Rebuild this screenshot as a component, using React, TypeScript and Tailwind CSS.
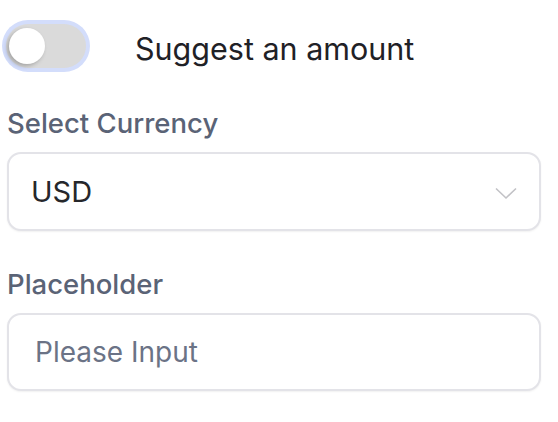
import React, { useState } from 'react';

const App: React.FC = () => {
  const [suggest, setSuggest] = useState(false);
  const [currency, setCurrency] = useState('USD');

  return (
    <div className="min-h-screen bg-white pl-[7px] pr-[17px] font-['Inter','Liberation_Sans',sans-serif]">
      <div className="flex items-start pt-[24px]">
        <button
          onClick={() => setSuggest(!suggest)}
          className={`relative ml-[-1px] h-[44px] w-[80px] shrink-0 rounded-full ring-4 ring-[#d3ddfb] ${
            suggest ? 'bg-[#3b82f6]' : 'bg-[#dadada]'
          }`}
        >
          <span
            className={`absolute top-[4px] h-[36px] w-[36px] rounded-full bg-white shadow-[-2px_2px_4px_rgba(0,0,0,0.25)] ${
              suggest ? 'left-[40px]' : 'left-[3px]'
            }`}
          />
        </button>
        <span className="ml-[49px] mt-[6px] text-[30.5px] leading-[38px] text-[#1f2126]">Suggest an amount</span>
      </div>

      <div className="mt-[38px]">
        <label className="block text-[27.5px] font-medium leading-[34px] text-[#5a6376]">Select Currency</label>
        <div className="relative mt-[12px] h-[79px] rounded-[14px] border-2 border-[#e3e3e8] bg-white shadow-[0_1px_2px_rgba(0,0,0,0.06)]">
          <div className="flex h-full items-center justify-between pl-[22px] pr-[22px]">
            <span className="text-[29px] text-[#26272b]">{currency}</span>
            <svg width="22" height="13" viewBox="0 0 22 13" fill="none" className="mt-[4px]">
              <path d="M1 1.5 L11 11 L21 1.5" stroke="#c2c2c6" strokeWidth="1.6" />
            </svg>
          </div>
          <select
            value={currency}
            onChange={(e) => setCurrency(e.target.value)}
            className="absolute inset-0 cursor-pointer opacity-0"
          >
            <option>USD</option>
            <option>EUR</option>
            <option>GBP</option>
          </select>
        </div>
      </div>

      <div className="mt-[36px]">
        <label className="block text-[27.5px] font-medium leading-[34px] text-[#5a6376]">Placeholder</label>
        <input
          placeholder="Please Input"
          className="mt-[12px] block h-[78px] w-full rounded-[14px] border-2 border-[#e3e3e8] bg-white px-[26px] text-[28px] text-[#26272b] shadow-[0_1px_2px_rgba(0,0,0,0.06)] outline-none placeholder:text-[#6b7386]"
        />
      </div>
    </div>
  );
};

export default App;
